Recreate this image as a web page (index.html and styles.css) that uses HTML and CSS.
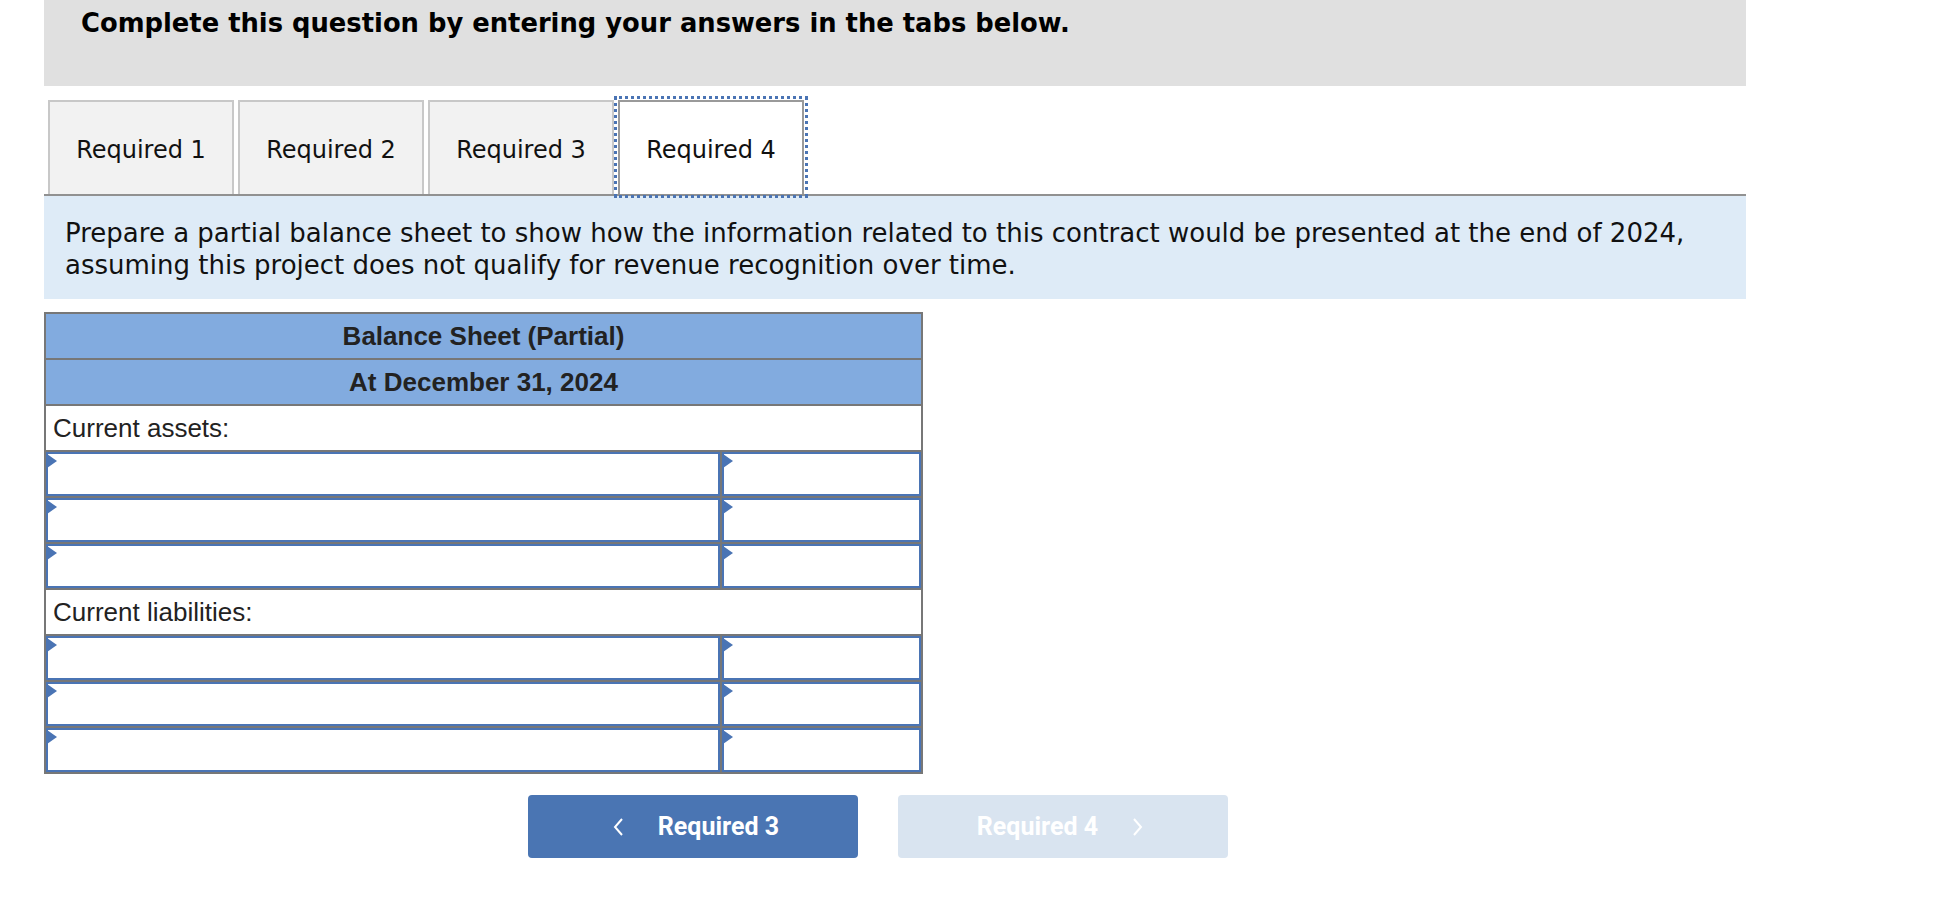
FILE: index.html
```html
<!DOCTYPE html>
<html lang="en">
<head>
<meta charset="utf-8">
<title>Required 4</title>
<link rel="stylesheet" href="styles.css">
</head>
<body>
<div class="page">
  <div class="prompt">Complete this question by entering your answers in the tabs below.</div>

  <div class="tabs">
    <div class="tab">Required 1</div>
    <div class="tab">Required 2</div>
    <div class="tab">Required 3</div>
    <div class="tab active">Required 4</div>
  </div>

  <div class="instructions">Prepare a partial balance sheet to show how the information related to this contract would be presented at the end of 2024,<br>assuming this project does not qualify for revenue recognition over time.</div>

  <table class="sheet">
    <colgroup><col class="col-label"><col class="col-amount"></colgroup>
    <tr><th colspan="2">Balance Sheet (Partial)</th></tr>
    <tr><th colspan="2">At December 31, 2024</th></tr>
    <tr class="section"><td colspan="2">Current assets:</td></tr>
    <tr class="entry"><td><div class="field"></div></td><td><div class="field"></div></td></tr>
    <tr class="entry"><td><div class="field"></div></td><td><div class="field"></div></td></tr>
    <tr class="entry"><td><div class="field"></div></td><td><div class="field"></div></td></tr>
    <tr class="section"><td colspan="2">Current liabilities:</td></tr>
    <tr class="entry"><td><div class="field"></div></td><td><div class="field"></div></td></tr>
    <tr class="entry"><td><div class="field"></div></td><td><div class="field"></div></td></tr>
    <tr class="entry"><td><div class="field"></div></td><td><div class="field"></div></td></tr>
  </table>

  <div class="nav">
    <div class="btn prev">
      <svg class="chev" width="12" height="20" viewBox="0 0 12 20"><polyline points="10,2 3,10 10,18" fill="none" stroke="#fff" stroke-width="2"/></svg>
      <span>Required 3</span>
    </div>
    <div class="btn next">
      <span>Required 4</span>
      <svg class="chev" width="12" height="20" viewBox="0 0 12 20"><polyline points="2,2 9,10 2,18" fill="none" stroke="#fff" stroke-width="2"/></svg>
    </div>
  </div>
</div>
</body>
</html>
```

FILE: styles.css
```css
html, body {
  margin: 0;
  padding: 0;
  background: #fff;
}

.page {
  margin-left: 44px;
  width: 1702px;
  font-family: Verdana, "DejaVu Sans", sans-serif;
  color: #111;
}

.prompt {
  box-sizing: border-box;
  height: 86px;
  padding: 7px 37px 0;
  background: #e0e0e0;
  font-weight: bold;
  font-size: 25.8px;
  line-height: 32px;
  color: #000;
}

.tabs {
  display: flex;
  align-items: flex-end;
  margin-top: 14px;
  height: 94px;
  border-bottom: 2px solid #919191;
}

.tab {
  box-sizing: border-box;
  width: 186px;
  height: 94px;
  margin-left: 4px;
  padding-top: 4px;
  border: 2px solid #c8c8c8;
  border-bottom: 0;
  background: #f2f2f2;
  display: flex;
  align-items: center;
  justify-content: center;
  font-size: 24px;
  color: #111;
}

.tab.active {
  background: #fff;
  border-color: #9a9a9a;
  outline: 3px dotted #4a74b4;
  outline-offset: 1px;
}

.instructions {
  box-sizing: border-box;
  height: 103px;
  padding: 21px 21px 0;
  background: #deebf7;
  font-size: 26px;
  line-height: 32px;
  color: #111;
  white-space: nowrap;
}

.sheet {
  margin-top: 13px;
  width: 877px;
  border-collapse: collapse;
  table-layout: fixed;
  font-family: Arial, "Liberation Sans", sans-serif;
  font-size: 26px;
  color: #222;
}

.col-label { width: 676px; }
.col-amount { width: 201px; }

.sheet th,
.sheet td {
  border: 2px solid #777;
  padding: 0;
  height: 44px;
}

.sheet th {
  background: #82abdf;
  font-weight: bold;
  text-align: center;
}

.section td {
  padding: 0 7px;
  text-align: left;
  background: #fff;
}

.field {
  position: relative;
  box-sizing: border-box;
  height: 44px;
  border: 2px solid #4a74b4;
  background: #fff;
}

.field::before {
  content: "";
  position: absolute;
  left: -1px;
  top: 0;
  width: 0;
  height: 0;
  border-left: 10px solid #4a74b4;
  border-top: 7px solid transparent;
  border-bottom: 7px solid transparent;
}

.nav {
  display: flex;
  justify-content: center;
  gap: 40px;
  margin-top: 21px;
  padding-right: 34px;
}

.btn {
  box-sizing: border-box;
  width: 330px;
  height: 63px;
  border-radius: 4px;
  display: flex;
  align-items: center;
  justify-content: center;
  gap: 34px;
  font-family: Roboto, "Liberation Sans", sans-serif;
  font-weight: bold;
  font-size: 25px;
  color: #fff;
}

.btn.prev { background: #4a75b3; padding-left: 5px; }
.btn.next { background: #d9e4f0; padding-right: 5px; }

.chev { display: block; }
```
